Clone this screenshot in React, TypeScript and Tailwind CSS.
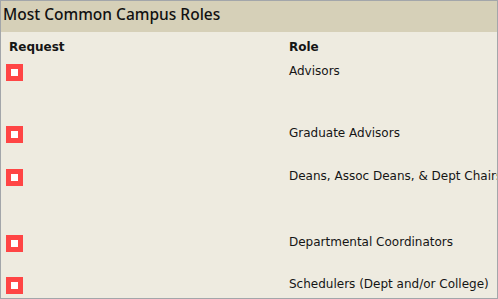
const rows = [
  { role: "Advisors", h: "h-[62px]" },
  { role: "Graduate Advisors", h: "h-[43px]" },
  { role: "Deans, Assoc Deans, & Dept Chairs", h: "h-[66px]" },
  { role: "Departmental Coordinators", h: "h-[42px]" },
  { role: "Schedulers (Dept and/or College)", h: "h-[42px]" },
];

function RequestBox() {
  return (
    <div className="ml-[5px] mt-[1px] flex h-[17px] w-[17px] items-center justify-center bg-[#ff4545]">
      <div className="h-[7px] w-[7px] bg-white" />
    </div>
  );
}

export default function App() {
  return (
    <div
      className="h-[299px] w-[498px] overflow-hidden border border-[#a3a6aa] bg-[#eeebe0] text-[#151515]"
      style={{ fontFamily: '"DejaVu Sans", Verdana, sans-serif' }}
    >
      <div className="flex h-[31px] items-center bg-[#d6d0b8] pb-[4px] pl-[2px] font-['Noto_Sans',sans-serif] text-[15.5px] font-medium text-[#111]">
        Most Common Campus Roles
      </div>
      <div className="grid h-[31px] grid-cols-[288px_1fr] pt-[8px] text-[12px] leading-[15px] font-bold">
        <div className="pl-[8px]">Request</div>
        <div>Role</div>
      </div>
      {rows.map((r) => (
        <div key={r.role} className={`grid grid-cols-[288px_1fr] text-[12px] leading-[15px] ${r.h}`}>
          <div>
            <RequestBox />
          </div>
          <div className="whitespace-nowrap pt-[1px]">{r.role}</div>
        </div>
      ))}
    </div>
  );
}
